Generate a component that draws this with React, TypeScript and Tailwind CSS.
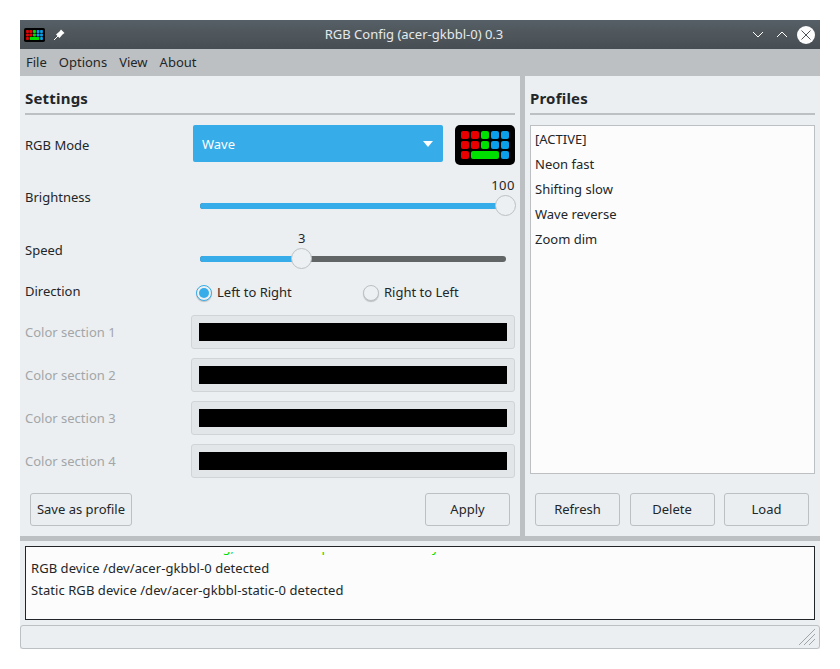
import React from "react";

const font = { fontFamily: '"Noto Sans", sans-serif' };

function KbIcon({ size }: { size: "s" | "l" }) {
  const big = size === "l";
  const w = big ? 60 : 21;
  const h = big ? 40 : 14;
  return (
    <svg width={w} height={h} viewBox="0 0 60 40" className="shrink-0">
      <rect x="0" y="0" width="60" height="40" rx="5" fill="#000" />
      {[0, 1].map((r) =>
        [
          ["#e80000", 6],
          ["#e80000", 16],
          ["#00e000", 26],
          ["#0a9fe8", 36],
          ["#0a9fe8", 46],
        ].map(([c, x], i) => (
          <rect key={`${r}-${i}`} x={(x as number)} y={6 + r * 10} width="8" height="8" rx="2" fill={c as string} />
        ))
      )}
      <rect x="6" y="26" width="8" height="8" rx="2" fill="#e80000" />
      <rect x="16" y="26" width="28" height="8" rx="2" fill="#00e000" />
      <rect x="46" y="26" width="8" height="8" rx="2" fill="#0a9fe8" />
    </svg>
  );
}

function Btn({ children, className }: { children: React.ReactNode; className: string }) {
  return (
    <div className={`h-[33px] flex items-center justify-center rounded-[3px] border border-[#bcc0c2] bg-[#eaeef1] pt-[1px] ${className}`}>
      {children}
    </div>
  );
}

function Slider({ pct }: { pct: number }) {
  return (
    <div className="relative h-[22px] w-[306px] ml-[7px]">
      <div className="absolute top-[8px] left-0 right-0 h-[6px] rounded-full bg-[#626566]" />
      <div className="absolute top-[8px] left-0 h-[6px] rounded-full bg-[#36ace8]" style={{ width: `${pct}%` }} />
      <div
        className="absolute top-0 w-[21px] h-[21px] -ml-[11px] rounded-full border border-[#bcc0c2] bg-[#edf0f3]"
        style={{ left: `${pct}%` }}
      />
    </div>
  );
}

function ColorRow({ label }: { label: string }) {
  return (
    <div className="flex items-center h-[34px] mb-[9px]">
      <div className="w-[166px] text-[#a3a6a8] pt-[2px]">{label}</div>
      <div className="w-[324px] h-[34px] rounded-[3px] border border-[#d0d4d6] bg-[#e2e6e9] px-[7px] py-[7px]">
        <div className="h-[18px] bg-black" />
      </div>
    </div>
  );
}

export default function App() {
  return (
    <div className="min-h-[669px] bg-white pt-[20px] pl-[20px] text-[13px] text-[#232629]" style={font}>
      <div className="w-[800px] bg-[#ebeff2]">
        <div className="h-[29px] bg-gradient-to-b from-[#565f65] to-[#474e53] flex items-center pl-[4px] pr-[5px] text-white">
          <KbIcon size="s" />
          <svg width="13" height="13" viewBox="0 0 13 13" className="ml-[8px] shrink-0">
            <path d="M1 12 L5 8" stroke="#fff" strokeWidth="1" />
            <path d="M3 6.5 L6.5 3.5 L8 1.5 L11.5 5 L9.5 6.5 L6.5 10 Z" fill="#fff" />
          </svg>
          <div className="flex-1 text-center text-[13px] text-[#e6e9eb] pl-[10px]">RGB Config (acer-gkbbl-0) 0.3</div>
          <svg width="12" height="7" viewBox="0 0 12 7" className="mr-[12px]">
            <path d="M1 1 L6 6 L11 1" fill="none" stroke="#fff" strokeWidth="1" />
          </svg>
          <svg width="12" height="7" viewBox="0 0 12 7" className="mr-[9px]">
            <path d="M1 6 L6 1 L11 6" fill="none" stroke="#fff" strokeWidth="1" />
          </svg>
          <svg width="18" height="18" viewBox="0 0 18 18">
            <circle cx="9" cy="9" r="9" fill="#fcfcfc" />
            <path d="M4.5 4.5 L13.5 13.5 M13.5 4.5 L4.5 13.5" stroke="#4d5257" strokeWidth="1" />
          </svg>
        </div>

        <div className="h-[27px] bg-[#bcc0c2] flex items-center pl-[6px] gap-[12px]">
          <span>File</span>
          <span>Options</span>
          <span>View</span>
          <span>About</span>
        </div>

        <div className="flex h-[460px]">
          <div className="w-[500px] pl-[5px] pr-[5px] pt-[12px]">
            <div className="h-[27px] border-b-2 border-[#bcc0c2] font-bold text-[15px] tracking-[0.2px] leading-[21px] mb-[10px]">Settings</div>
            <div className="flex h-[40px]">
              <div className="w-[168px] leading-[40px]">RGB Mode</div>
              <div className="w-[250px] h-[37px] rounded-[2px] bg-[#36ace8] text-white flex items-center justify-between pl-[9px] pr-[10px]">
                <span className="pt-[2px]">Wave</span>
                <svg width="10" height="6" viewBox="0 0 10 6">
                  <path d="M0 0 H10 L5 6 Z" fill="#fff" />
                </svg>
              </div>
              <div className="ml-[12px]">
                <KbIcon size="l" />
              </div>
            </div>
            <div className="flex h-[52px] items-start">
              <div className="w-[168px] mt-[23px]">Brightness</div>
              <div className="w-[322px] mt-[11px]">
                <div className="text-right h-[19px] leading-[18px] tracking-[0.5px]">100</div>
                <Slider pct={100} />
              </div>
            </div>
            <div className="flex h-[53px] items-start">
              <div className="w-[168px] mt-[24px]">Speed</div>
              <div className="w-[322px] mt-[12px]">
                <div className="h-[19px] leading-[18px] pl-[105px]">3</div>
                <Slider pct={33.3} />
              </div>
            </div>
            <div className="flex h-[45px] items-center pb-[3px]">
              <div className="w-[171px] pt-[2px]">Direction</div>
              <div className="w-[167px] flex items-center gap-[5px] pt-[4px]">
                <div className="w-[16px] h-[16px] rounded-full border border-[#36ace8] bg-[#edf0f3] flex items-center justify-center shadow-[0_1px_1px_rgba(0,0,0,0.2)]">
                  <div className="w-[10px] h-[10px] rounded-full bg-[#36ace8]" />
                </div>
                <span>Left to Right</span>
              </div>
              <div className="flex items-center gap-[5px] pt-[4px]">
                <div className="w-[16px] h-[16px] rounded-full border border-[#bcc0c2] bg-[#edf0f3] shadow-[0_1px_1px_rgba(0,0,0,0.2)]" />
                <span>Right to Left</span>
              </div>
            </div>
            <ColorRow label="Color section 1" />
            <ColorRow label="Color section 2" />
            <ColorRow label="Color section 3" />
            <ColorRow label="Color section 4" />
            <div className="flex justify-between pl-[5px] pr-[5px] mt-[15px]">
              <Btn className="w-[102px]">Save as profile</Btn>
              <Btn className="w-[85px]">Apply</Btn>
            </div>
          </div>

          <div className="w-[5px] bg-[#bcc0c2]" />

          <div className="flex-1 pl-[5px] pr-[5px] pt-[12px]">
            <div className="h-[27px] border-b-2 border-[#bcc0c2] font-bold text-[15px] tracking-[0.2px] leading-[21px] mb-[10px]">Profiles</div>
            <div className="h-[349px] border border-[#bcc0c2] bg-[#fcfcfc] px-[4px] pt-[1px]">
              {["[ACTIVE]", "Neon fast", "Shifting slow", "Wave reverse", "Zoom dim"].map((p) => (
                <div key={p} className="h-[25px] leading-[25px]">{p}</div>
              ))}
            </div>
            <div className="flex justify-between pl-[5px] pr-[6px] mt-[19px]">
              <Btn className="w-[85px]">Refresh</Btn>
              <Btn className="w-[85px]">Delete</Btn>
              <Btn className="w-[85px]">Load</Btn>
            </div>
          </div>
        </div>

        <div className="h-[5px] bg-[#bcc0c2]" />

        <div className="px-[5px] pt-[5px]">
          <div className="h-[74px] border border-[#232629] bg-[#fcfcfc] pl-[5px] pt-[5px]">
            <div className="h-[67px] overflow-hidden tracking-[0.06px]">
              <div className="-mt-[16px] text-[#00e000] h-[21px] leading-[22px] whitespace-nowrap">Acer RGB kernel module loading, it should be up to date in a delay</div>
              <div className="h-[22px] leading-[22px]">RGB device /dev/acer-gkbbl-0 detected</div>
              <div className="h-[22px] leading-[22px]">Static RGB device /dev/acer-gkbbl-static-0 detected</div>
            </div>
          </div>
        </div>

        <div className="relative mt-[5px] h-[24px] rounded-[3px] border border-[#bcc0c2] bg-[#ebeff2]">
          <svg width="18" height="18" viewBox="0 0 18 18" className="absolute right-[3px] bottom-[2px]">
            <path d="M1 17 L17 1 M6 17 L17 6 M11 17 L17 11" stroke="#a0a4a6" strokeWidth="1" fill="none" />
          </svg>
        </div>
      </div>
    </div>
  );
}
